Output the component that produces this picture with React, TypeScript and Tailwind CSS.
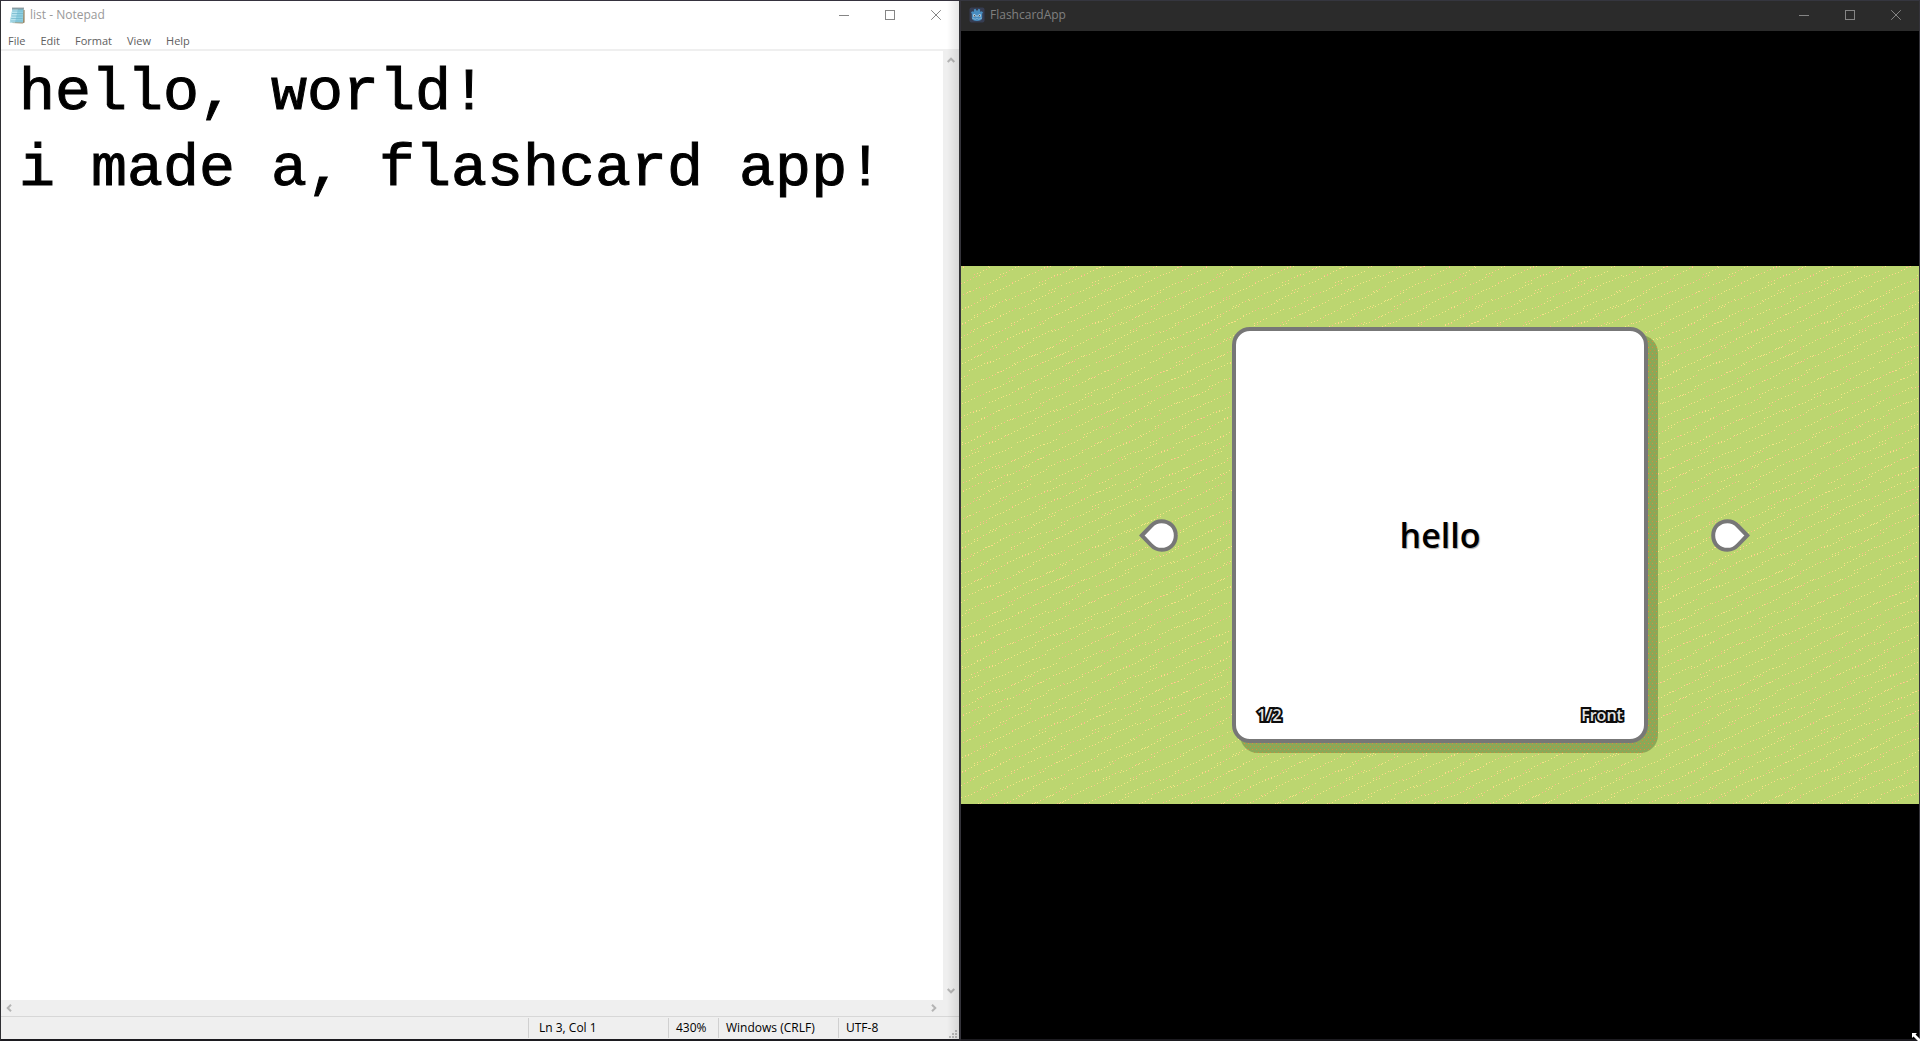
import React from "react";

const MENUS = ["File", "Edit", "Format", "View", "Help"];

type CaptionProps = { className: string };

function CaptionButtons({ className }: CaptionProps) {
  const cell = "flex h-full w-[46px] items-center justify-center";
  return (
    <div className={`flex h-full ${className}`}>
      <button type="button" aria-label="Minimize" className={cell}>
        <svg width="10" height="10" viewBox="0 0 10 10" stroke="currentColor" fill="none">
          <path d="M0 5.5H10" />
        </svg>
      </button>
      <button type="button" aria-label="Maximize" className={cell}>
        <svg width="10" height="10" viewBox="0 0 10 10" stroke="currentColor" fill="none">
          <rect x="0.5" y="0.5" width="9" height="9" />
        </svg>
      </button>
      <button type="button" aria-label="Close" className={cell}>
        <svg width="10" height="10" viewBox="0 0 10 10" stroke="currentColor" fill="none">
          <path d="M0.2 0.2L9.8 9.8M9.8 0.2L0.2 9.8" />
        </svg>
      </button>
    </div>
  );
}

function NotepadIcon() {
  return (
    <svg width="16" height="17" viewBox="0 0 16 17" aria-hidden="true">
      <path d="M13 2.5L15.6 3V15.5L13.5 16.6L3 16Z" fill="#9a8868" />
      <path d="M3.5 1.5H14.5L14 15.5H0.8Z" fill="#8fcfe0" />
      <path d="M3.5 1.5H9L6 15.5H0.8Z" fill="#b9e3ee" />
      <path d="M3.3 4H14M3 6.5H14M2.6 9H13.6M2.2 11.5H13.6M1.6 14H13.6" stroke="#6bb2c8" strokeWidth="0.7" />
      <path d="M3.5 1.5H14.5" stroke="#46535a" strokeWidth="2" strokeDasharray="1 1" />
    </svg>
  );
}

function GodotIcon() {
  return (
    <svg width="16" height="16" viewBox="0 0 16 16" aria-hidden="true">
      <rect x="0.5" y="0.5" width="15" height="15" rx="2" fill="#363d52" />
      <path
        d="M2 5.5L3.2 4.2L4.3 4.8L5 4.3L4.8 2.6L6.6 1.8L7.3 3.5H8.7L9.4 1.8L11.2 2.6L11 4.3L11.7 4.8L12.8 4.2L14 5.5L13.2 6.7V11C13.2 13 10.8 14 8 14S2.8 13 2.8 11V6.7Z"
        fill="#478cbf"
      />
      <circle cx="5.3" cy="8.6" r="1.3" fill="#d5e5f0" />
      <circle cx="10.7" cy="8.6" r="1.3" fill="#d5e5f0" />
      <circle cx="5.4" cy="8.7" r="0.7" fill="#414042" />
      <circle cx="10.6" cy="8.7" r="0.7" fill="#414042" />
      <path d="M8 8.2V10" stroke="#d5e5f0" strokeWidth="0.8" />
      <path d="M3 11.2H5L5.3 12.2H7L7.3 11.4H8.7L9 12.2H10.7L11 11.2H13" stroke="#9cc3de" strokeWidth="0.6" fill="none" />
    </svg>
  );
}

type ChevronProps = { d: string };

function Chevron({ d }: ChevronProps) {
  return (
    <svg width="8" height="8" viewBox="0 0 8 8" fill="none" stroke="#b4b4b4" strokeWidth="2" aria-hidden="true">
      <path d={d} />
    </svg>
  );
}

function ResizeGrip() {
  const dots = [
    [6, 0], [3, 3], [6, 3], [0, 6], [3, 6], [6, 6],
  ];
  return (
    <svg width="8" height="8" viewBox="0 0 8 8" fill="#b9b9b9" aria-hidden="true">
      {dots.map(([x, y]) => (
        <rect key={`${x}-${y}`} x={x} y={y} width="2" height="2" />
      ))}
    </svg>
  );
}

function Notepad() {
  return (
    <section
      aria-label="Notepad"
      className="relative flex min-w-0 flex-col border-x border-t border-b-2 border-x-[#2f2f33] border-t-[#35323e] border-b-[#1c1b20] bg-white"
    >
      <header className="flex h-[30px] shrink-0 items-center justify-between pb-[2px] text-[#999999]">
        <div className="flex items-center gap-[5px] pl-2">
          <NotepadIcon />
          <h1 className="text-[12px] leading-4">list - Notepad</h1>
        </div>
        <CaptionButtons className="text-[#858585]" />
      </header>
      <nav className="flex h-5 shrink-0 items-center gap-[15px] border-b-2 border-[#efefef] px-[7px] pt-[2px] text-[11px] leading-4 text-[#606060]">
        {MENUS.map((name) => (
          <button key={name} type="button">{name}</button>
        ))}
      </nav>
      <div className="flex min-h-0 grow">
        <textarea
          aria-label="Document text"
          spellCheck={false}
          wrap="off"
          defaultValue={"hello, world!\ni made a, flashcard app!"}
          className="min-w-0 grow resize-none overflow-hidden bg-white pt-1 pl-[18px] font-['Liberation_Mono',monospace] text-[60px] leading-[76px] text-black outline-none [-webkit-text-stroke:1px_black]"
        />
        <div className="flex w-4 shrink-0 flex-col items-center justify-between bg-[#efefef] pt-[5px] pb-[5px]">
          <Chevron d="M0.7 6L4 2.7L7.3 6" />
          <Chevron d="M0.7 2L4 5.3L7.3 2" />
        </div>
      </div>
      <div className="flex h-4 shrink-0 items-center justify-between bg-[#efefef] pr-[21px] pl-1">
        <Chevron d="M6 0.7L2.7 4L6 7.3" />
        <Chevron d="M2 0.7L5.3 4L2 7.3" />
      </div>
      <footer className="flex h-[23px] shrink-0 justify-end border-t border-[#d7d7d7] bg-[#efefef] py-[1px] text-[12px] leading-5 text-black">
        <span className="w-[140px] border-l border-[#d0d0d0] pl-[10px]">Ln 3, Col 1</span>
        <span className="w-[50px] border-l border-[#d0d0d0] pl-[7px]">430%</span>
        <span className="w-[120px] border-l border-[#d0d0d0] pl-[7px]">Windows (CRLF)</span>
        <span className="flex w-[121px] items-end justify-between border-l border-[#d0d0d0] pr-[2px] pl-[7px]">
          <span>UTF-8</span>
          <ResizeGrip />
        </span>
      </footer>
      <div className="pointer-events-none absolute inset-y-0 right-0 w-3 bg-linear-to-r from-black/0 to-black/10" />
    </section>
  );
}

/* Speckles run in short dashes that climb to the right. */
function speckles() {
  const out: { x: number; y: number; c: string }[] = [];
  const colors = ["#f6e384", "#ffd68a", "#f3e884", "#f9b98a"];
  let seed = 7;
  const rnd = () => {
    seed = (seed * 1103515245 + 12345) % 2147483648;
    return seed / 2147483648;
  };
  for (let row = 0; row < 28; row++) {
    for (let col = 0; col < 9; col++) {
      const x0 = col * 27 + ((row * 11) % 27) + Math.floor(rnd() * 4);
      const y0 = row * 8 + Math.floor(rnd() * 3);
      const n = 5 + Math.floor(rnd() * 4);
      for (let i = 0; i < n; i++) {
        out.push({
          x: (x0 + i * 3) % 243,
          y: (y0 - Math.floor(i * 1.4) + 224) % 224,
          c: colors[Math.floor(rnd() * 4)],
        });
      }
    }
  }
  return out;
}

const SPECKLES = speckles();

function GrassTexture() {
  return (
    <svg className="absolute inset-0 h-full w-full" aria-hidden="true" shapeRendering="crispEdges">
      <defs>
        <pattern id="grass" width="243" height="224" patternUnits="userSpaceOnUse">
          {SPECKLES.map((s, i) => (
            <rect key={i} x={s.x} y={s.y} width="1" height="1" fill={s.c} />
          ))}
        </pattern>
      </defs>
      <rect width="100%" height="100%" fill="#bcd670" />
      <rect width="100%" height="100%" fill="url(#grass)" />
    </svg>
  );
}

function ShadowTexture() {
  return (
    <svg className="h-full w-full" aria-hidden="true" shapeRendering="crispEdges">
      <defs>
        <pattern id="shade" width="4" height="6" patternUnits="userSpaceOnUse">
          <rect x="0" y="0" width="1" height="1" fill="#e0883a" />
          <rect x="2" y="3" width="1" height="1" fill="#d08a3c" />
        </pattern>
      </defs>
      <rect width="100%" height="100%" fill="#8ba857" />
      <rect width="100%" height="100%" fill="url(#shade)" />
    </svg>
  );
}

type ArrowProps = { label: string; flip?: boolean };

function ArrowButton({ label, flip }: ArrowProps) {
  return (
    <button type="button" aria-label={label}>
      <svg width="39" height="33" viewBox="0 0 39 33" className={flip ? "-scale-x-100" : ""}>
        <path
          d="M2.8 16.5L12 7C15 3.8 18.5 2.2 22.5 2.2C30.5 2.2 36.8 8 36.8 16.5S30.5 30.8 22.5 30.8C18.5 30.8 15 29.2 12 26Z"
          fill="#fff"
          stroke="#777777"
          strokeWidth="4"
        />
      </svg>
    </button>
  );
}

const OUTLINED =
  "text-[16px] leading-5 font-semibold text-[#e4e4e4] [-webkit-text-stroke:4px_#0c0c0c] [paint-order:stroke_fill]";

function FlashcardApp() {
  return (
    <section
      aria-label="FlashcardApp"
      className="relative flex min-w-0 flex-col border-x border-t border-b-2 border-x-[#35343b] border-t-[#35363f] border-b-[#1c1b20] bg-black"
    >
      <header className="flex h-[30px] shrink-0 items-center justify-between bg-[#2b2b2b] pb-[2px] text-[#808080]">
        <div className="flex items-center gap-[5px] pl-2">
          <GodotIcon />
          <h1 className="text-[12px] leading-4">FlashcardApp</h1>
        </div>
        <CaptionButtons className="text-[#858585]" />
      </header>
      <main className="flex grow items-center">
        <div className="relative grid aspect-video w-full grid-cols-[1fr_43.4%_1fr] items-center overflow-hidden">
          <GrassTexture />
          <div className="relative flex justify-end pr-[54px]">
            <ArrowButton label="Previous card" />
          </div>
          <div className="relative aspect-square">
            <div className="absolute top-2 -right-[10px] -bottom-[10px] left-2 overflow-hidden rounded-[18px]">
              <ShadowTexture />
            </div>
            <article className="relative flex h-full flex-col rounded-[18px] border-4 border-[#777777] bg-white">
              <p className="flex grow items-center justify-center pt-[34px] text-[34px] leading-10 font-semibold text-black [text-shadow:1px_1px_1px_#aaa]">
                hello
              </p>
              <div className="flex h-[34px] items-start justify-between px-[21px]">
                <span className={OUTLINED}>1/2</span>
                <span className={OUTLINED}>Front</span>
              </div>
            </article>
          </div>
          <div className="relative flex pl-[63px]">
            <ArrowButton label="Next card" flip />
          </div>
        </div>
      </main>
      <svg
        width="8"
        height="8"
        viewBox="0 0 8 8"
        aria-hidden="true"
        className="pointer-events-none absolute -right-px -bottom-[2px]"
      >
        <path d="M0 0H5L3.5 1.5L8 6V8H6L1.5 3.5L0 5Z" fill="#fff" />
      </svg>
    </section>
  );
}

export default function App() {
  return (
    <div className="grid min-h-screen grid-cols-2 bg-black font-['Open_Sans',sans-serif]">
      <Notepad />
      <FlashcardApp />
    </div>
  );
}
